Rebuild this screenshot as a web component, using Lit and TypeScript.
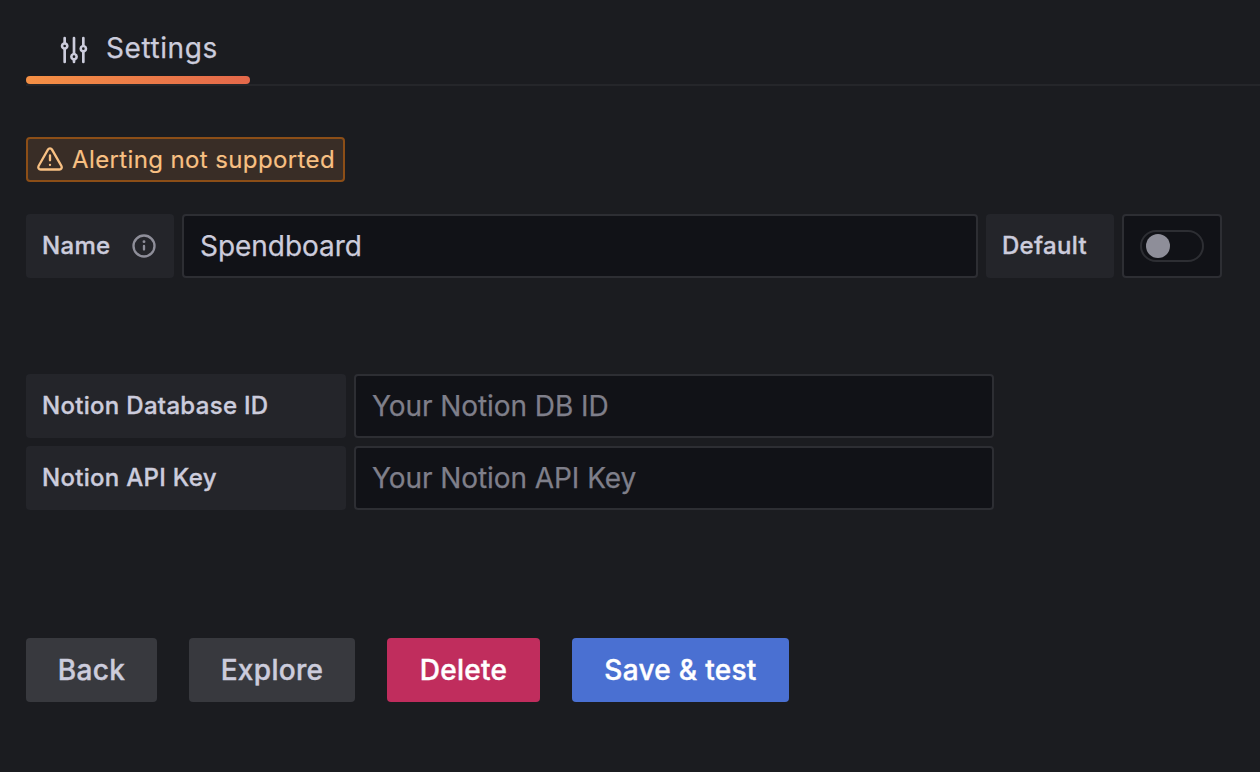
import { LitElement, html, css } from "lit";
import { customElement } from "lit/decorators.js";

@customElement("app-root")
export class AppRoot extends LitElement {
  static styles = css`
    :host {
      display: block;
      box-sizing: border-box;
      width: 100%;
      height: 772px;
      overflow: hidden;
      background: #1b1c20;
      color: #ccccdc;
      font-family: Inter, "Liberation Sans", sans-serif;
      font-size: 28px;
      letter-spacing: 0.3px;
      -webkit-text-stroke: 0.25px currentColor;
      padding-left: 26px;
    }
    * {
      box-sizing: border-box;
    }
    svg {
      display: block;
      fill: currentColor;
      flex: none;
    }
    .tabs {
      display: flex;
      height: 86px;
      border-bottom: 2px solid #25262a;
    }
    .tab {
      display: flex;
      flex-direction: column;
      justify-content: space-between;
      width: 224px;
      height: 84px;
    }
    .tab-label {
      display: flex;
      align-items: flex-start;
      gap: 16px;
      padding: 32px 0 0 32px;
      line-height: 32px;
      letter-spacing: 0.58px;
    }
    .tab-icon {
      margin-top: 2px;
    }
    .tab-bar {
      height: 8px;
      border-radius: 4px;
      background: linear-gradient(90deg, #f59045, #e4684a);
    }
    .badge {
      display: flex;
      align-items: center;
      gap: 8px;
      width: 319px;
      height: 45px;
      margin-top: 51px;
      padding-left: 8px;
      border: 2px solid #8c4e17;
      border-radius: 4px;
      background: #392d26;
      color: #f8c083;
      font-size: 24px;
      letter-spacing: 0.38px;
      white-space: nowrap;
      -webkit-text-stroke: 0.15px currentColor;
    }
    .warning {
      margin-bottom: 2px;
      stroke: none;
    }
    .row {
      display: flex;
      gap: 8px;
      height: 64px;
    }
    .main-row {
      margin-top: 32px;
      margin-bottom: 96px;
    }
    .fields {
      display: grid;
      gap: 8px;
    }
    .label {
      display: flex;
      align-items: center;
      justify-content: space-between;
      flex: none;
      width: 320px;
      padding: 0 16px 2px;
      border-radius: 4px;
      background: #24252a;
      font-size: 24px;
      font-weight: 500;
      white-space: nowrap;
      -webkit-text-stroke-width: 0.35px;
    }
    .label-name {
      width: 148px;
    }
    .label-default {
      width: 128px;
    }
    .info {
      color: #8e8e99;
      margin: 2px 0 0;
    }
    .input {
      width: 640px;
      height: 64px;
      margin: 0;
      padding: 0 16px;
      border: 2px solid #2d2e33;
      border-radius: 4px;
      background: #111217;
      color: #ccccdc;
      font: inherit;
      letter-spacing: -0.04px;
      outline: none;
    }
    .input::placeholder {
      color: #7f7f8a;
      opacity: 1;
      letter-spacing: -0.07px;
      -webkit-text-stroke-color: #7f7f8a;
    }
    .input-name {
      width: 796px;
    }
    .switch-box {
      display: flex;
      align-items: center;
      justify-content: center;
      width: 100px;
      border: 2px solid #2d2e33;
      border-radius: 4px;
      background: #111217;
    }
    .switch {
      display: flex;
      align-items: center;
      width: 64px;
      height: 32px;
      padding-left: 4px;
      border: 2px solid #2d2e33;
      border-radius: 16px;
    }
    .knob {
      width: 24px;
      height: 24px;
      border-radius: 50%;
      background: #8e8e99;
    }
    .actions {
      display: flex;
      gap: 32px;
      margin-top: 128px;
    }
    .btn {
      height: 64px;
      margin: 0;
      padding: 0;
      border: 0;
      border-radius: 4px;
      background: #38393e;
      color: #ccccdc;
      font: inherit;
      font-weight: 500;
      letter-spacing: inherit;
      white-space: nowrap;
      -webkit-text-stroke: 0.4px currentColor;
    }
    .back {
      width: 131px;
    }
    .explore {
      width: 166px;
    }
    .delete {
      width: 153px;
      background: #c02d5d;
      color: #fff;
    }
    .save {
      width: 217px;
      background: #4a70d2;
      color: #fff;
    }
  `;

  render() {
    return html`
      <nav class="tabs">
        <div class="tab">
          <div class="tab-label">
            <svg class="tab-icon" width="32" height="32" viewBox="0 0 24 24">
              <path d="M20,8.18V3a1,1,0,0,0-2,0V8.18a3,3,0,0,0,0,5.64V21a1,1,0,0,0,2,0V13.82a3,3,0,0,0,0-5.64ZM19,12a1,1,0,1,1,1-1A1,1,0,0,1,19,12Zm-6,2.18V3a1,1,0,0,0-2,0V14.18a3,3,0,0,0,0,5.64V21a1,1,0,0,0,2,0V19.82a3,3,0,0,0,0-5.64ZM12,18a1,1,0,1,1,1-1A1,1,0,0,1,12,18ZM6,6.18V3A1,1,0,0,0,4,3V6.18a3,3,0,0,0,0,5.64V21a1,1,0,0,0,2,0V11.82A3,3,0,0,0,6,6.18ZM5,10A1,1,0,1,1,6,9,1,1,0,0,1,5,10Z" />
            </svg>
            <span>Settings</span>
          </div>
          <div class="tab-bar"></div>
        </div>
      </nav>
      <div class="badge">
        <svg class="warning" width="28" height="28" viewBox="0 0 24 24">
          <path d="M12,16a1,1,0,1,0,1,1A1,1,0,0,0,12,16Zm10.67,1.47-8.05-14a3,3,0,0,0-5.24,0l-8,14A3,3,0,0,0,3.94,22H20.06a3,3,0,0,0,2.61-4.53Zm-1.73,2a1,1,0,0,1-.88.51H3.94a1,1,0,0,1-.88-.51,1,1,0,0,1,0-1l8-14a1,1,0,0,1,1.78,0l8.05,14A1,1,0,0,1,20.94,19.49ZM12,8a1,1,0,0,0-1,1v4a1,1,0,0,0,2,0V9A1,1,0,0,0,12,8Z" />
        </svg>
        <span>Alerting not supported</span>
      </div>
      <div class="row main-row">
        <div class="label label-name">
          <span>Name</span>
          <svg class="info" width="28" height="28" viewBox="0 0 24 24">
            <path d="M12,2A10,10,0,1,0,22,12,10,10,0,0,0,12,2Zm0,18a8,8,0,1,1,8-8A8,8,0,0,1,12,20Zm0-9a1,1,0,0,0-1,1v3a1,1,0,0,0,2,0V12A1,1,0,0,0,12,11Zm0-4a1.25,1.25,0,1,0,1.25,1.25A1.25,1.25,0,0,0,12,7Z" />
          </svg>
        </div>
        <input class="input input-name" .value=${"Spendboard"} />
        <div class="label label-default">Default</div>
        <div class="switch-box"><div class="switch"><div class="knob"></div></div></div>
      </div>
      <div class="fields">
        <div class="row">
          <div class="label">Notion Database ID</div>
          <input class="input" placeholder="Your Notion DB ID" />
        </div>
        <div class="row">
          <div class="label">Notion API Key</div>
          <input class="input" placeholder="Your Notion API Key" />
        </div>
      </div>
      <div class="actions">
        <button class="btn back">Back</button>
        <button class="btn explore">Explore</button>
        <button class="btn delete">Delete</button>
        <button class="btn save">Save &amp; test</button>
      </div>
    `;
  }
}
